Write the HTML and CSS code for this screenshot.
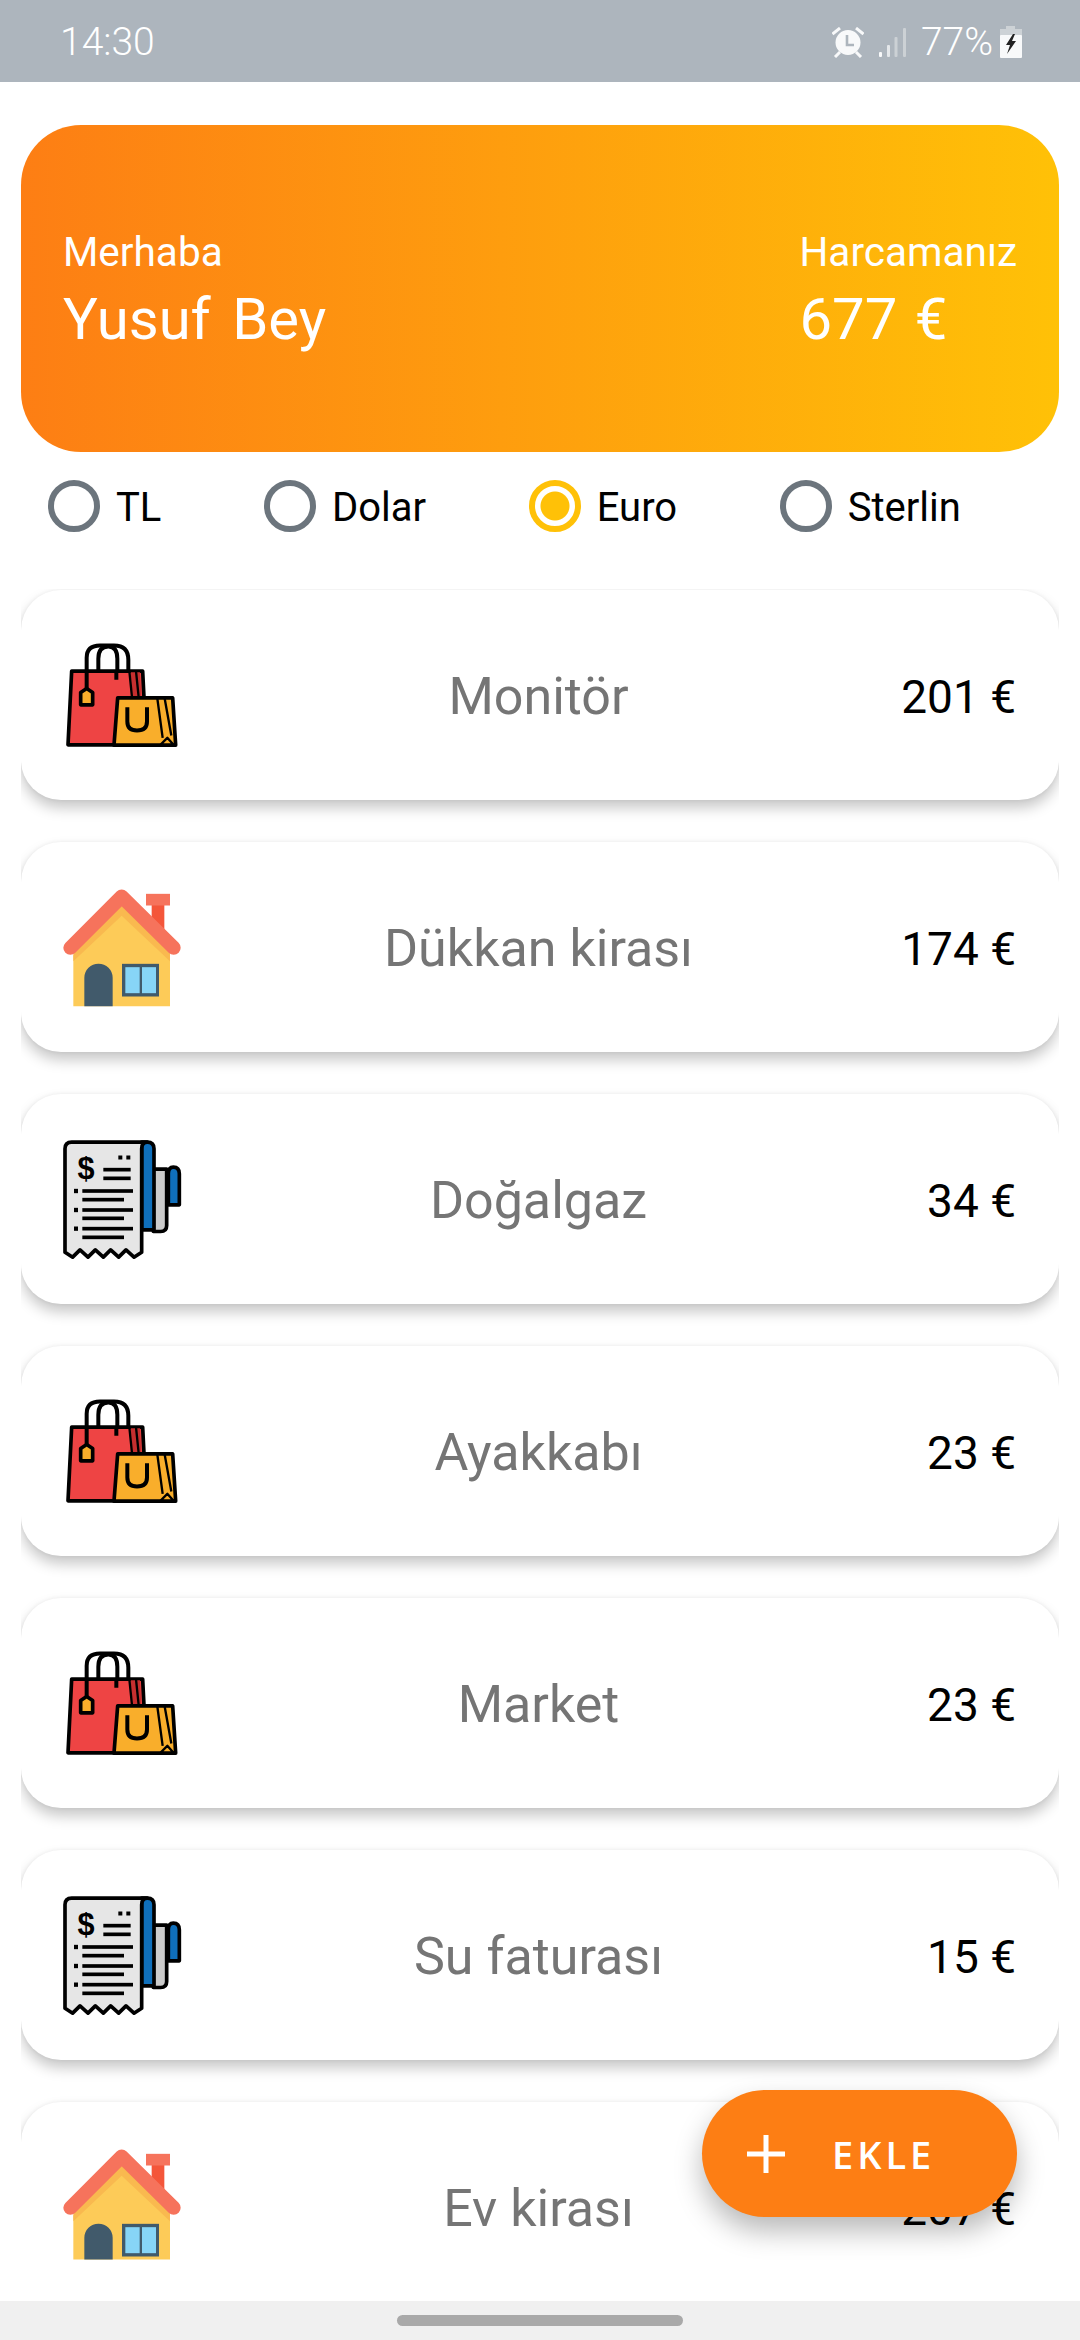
FILE: index.html
```html
<!DOCTYPE html>
<html lang="tr">
<head>
    <meta charset="UTF-8">
    <meta name="viewport" content="width=device-width, initial-scale=1.0">
    <title>Harcamalar</title>
    <link rel="stylesheet" href="styles.css">
</head>
<body>
    <svg class="icon-defs" width="0" height="0">
        <defs>
            <g id="bags">
                <path class="line" d="M140 205V112Q140 75 180 75H222Q265 75 265 118V150"/>
                <path class="line" d="M175 150V115Q175 78 205 78Q232 78 232 115V178"/>
                <path class="outline" fill="#ee4444" d="M95 152H308L312 232L222 373H84Z"/>
                <path class="line" d="M229 152V178M140 152V205"/>
                <path fill="#c62f2f" d="M272 155H300L304 230H278Z"/>
                <path class="line thin" d="M268 152L276 230M288 152L296 230"/>
                <path class="outline" fill="#f9ae2b" d="M122 253V216L140 204L158 216V253Z"/>
                <path class="outline" fill="#f9ae2b" d="M233 232H398L407 374H222Z"/>
                <path class="line" d="M262 260V303Q262 330 291 330Q321 330 321 303V260"/>
                <path class="line thin" d="M352 234L368 352M374 234L394 345"/>
                <path class="outline thin-fill" fill="#f9ae2b" d="M362 372L382 352L400 372Z"/>
            </g>
            <g id="house">
                <rect x="335" y="100" width="38" height="80" fill="#f4563a"/>
                <rect x="318" y="70" width="72" height="35" fill="#f6735c"/>
                <path fill="#fdcb58" d="M100 255L245 115L390 255V407H100Z"/>
                <path fill="#f9b94f" d="M100 235L245 105L390 235V272L245 136L100 272Z"/>
                <path fill="none" stroke="#f6735c" stroke-width="42" stroke-linecap="round" stroke-linejoin="round" d="M91 232L245 78L401 232"/>
                <path fill="#415a6b" d="M133 407V322A42 42 0 0 1 218 322V407Z"/>
                <rect x="246" y="280" width="111" height="98" fill="#415a6b"/>
                <rect x="256" y="290" width="43" height="78" fill="#87d5f7"/>
                <rect x="306" y="290" width="42" height="78" fill="#87d5f7"/>
            </g>
            <g id="receipt">
                <path class="outline" fill="#0f6fbb" d="M385 1003V910Q385 890 400 890Q418 890 418 910V1003Z"/>
                <path class="outline" fill="#cccccc" d="M340 896H380V1065Q380 1083 362 1083H340Z"/>
                <path class="outline" fill="#0f6fbb" d="M305 1078V815H322Q342 815 342 835V1078Z"/>
                <path class="outline" fill="#e6e6e6" d="M75 1145V835Q75 815 95 815H322Q305 815 305 835V1145L282 1160L258 1138L236 1160L212 1138L190 1160L166 1138L144 1160L120 1138L98 1160Z"/>
                <text class="receipt-sign" x="138" y="925">$</text>
                <rect x="235" y="855" width="12" height="12"/>
                <rect x="259" y="855" width="12" height="12"/>
                <rect x="190" y="892" width="82" height="11"/>
                <rect x="190" y="918" width="82" height="11"/>
                <rect x="102" y="955" width="12" height="13"/>
                <rect x="127" y="956" width="152" height="11"/>
                <rect x="127" y="982" width="125" height="11"/>
                <rect x="102" y="1012" width="12" height="13"/>
                <rect x="127" y="1013" width="152" height="11"/>
                <rect x="127" y="1038" width="125" height="11"/>
                <rect x="102" y="1068" width="12" height="13"/>
                <rect x="127" y="1069" width="152" height="11"/>
                <rect x="127" y="1095" width="125" height="11"/>
            </g>
        </defs>
    </svg>

    <div class="phone">
        <div class="status-bar">
            <span class="status-time">14:30</span>
            <div class="status-icons">
                <svg class="alarm" width="32" height="31" viewBox="0 0 32 31">
                    <circle cx="16" cy="15.5" r="12.5" fill="#f8f9fa"/>
                    <path d="M15 8V18H22" fill="none" stroke="#adb5bd" stroke-width="2.6"/>
                    <path d="M0.5 7L8 1M24 1L31.5 7" stroke="#f8f9fa" stroke-width="3" fill="none"/>
                    <path d="M3 30L8 25M29 30L24 25" stroke="#f8f9fa" stroke-width="3" fill="none"/>
                </svg>
                <svg class="signal" width="27" height="29" viewBox="0 0 27 29">
                    <rect x="0" y="24" width="3" height="5" rx="1" fill="#f8f9fa"/>
                    <rect x="8" y="17" width="3" height="12" rx="1" fill="#e4e7ea"/>
                    <rect x="15.5" y="9" width="3" height="20" rx="1" fill="#ccd1d5"/>
                    <rect x="24" y="0" width="3" height="29" rx="1" fill="#ccd1d5"/>
                </svg>
                <span class="status-battery">77%</span>
                <svg class="battery" width="22" height="32" viewBox="0 0 22 32">
                    <rect x="6" y="0" width="9" height="4" fill="#cdd2d6"/>
                    <rect x="0" y="3" width="22" height="7" fill="#cdd2d6"/>
                    <rect x="0" y="9" width="22" height="23" rx="1" fill="#f8f9fa"/>
                    <path d="M13 8L6 19H10L7 28L16 15H12L15 8Z" fill="#222"/>
                </svg>
            </div>
        </div>

        <header class="summary">
            <div class="summary-col">
                <span class="summary-label">Merhaba</span>
                <span class="summary-value summary-name">Yusuf Bey</span>
            </div>
            <div class="summary-col">
                <span class="summary-label">Harcamanız</span>
                <span class="summary-value">677 €</span>
            </div>
        </header>

        <div class="currency-row">
            <div class="radio"><span class="radio-mark"></span><span class="radio-label">TL</span></div>
            <div class="radio"><span class="radio-mark"></span><span class="radio-label">Dolar</span></div>
            <div class="radio"><span class="radio-mark selected"></span><span class="radio-label">Euro</span></div>
            <div class="radio"><span class="radio-mark"></span><span class="radio-label">Sterlin</span></div>
        </div>

        <main class="expense-list">
            <div class="expense-card">
                <svg class="expense-icon" viewBox="63 43.5 363 363"><use href="#bags"/></svg>
                <span class="expense-name">Monitör</span>
                <span class="expense-price">201 €</span>
            </div>
            <div class="expense-card">
                <svg class="expense-icon" viewBox="63 49.5 363 363"><use href="#house"/></svg>
                <span class="expense-name">Dükkan kirası</span>
                <span class="expense-price">174 €</span>
            </div>
            <div class="expense-card">
                <svg class="expense-icon" viewBox="63 805.5 363 363"><use href="#receipt"/></svg>
                <span class="expense-name">Doğalgaz</span>
                <span class="expense-price">34 €</span>
            </div>
            <div class="expense-card">
                <svg class="expense-icon" viewBox="63 43.5 363 363"><use href="#bags"/></svg>
                <span class="expense-name">Ayakkabı</span>
                <span class="expense-price">23 €</span>
            </div>
            <div class="expense-card">
                <svg class="expense-icon" viewBox="63 43.5 363 363"><use href="#bags"/></svg>
                <span class="expense-name">Market</span>
                <span class="expense-price">23 €</span>
            </div>
            <div class="expense-card">
                <svg class="expense-icon" viewBox="63 805.5 363 363"><use href="#receipt"/></svg>
                <span class="expense-name">Su faturası</span>
                <span class="expense-price">15 €</span>
            </div>
            <div class="expense-card">
                <svg class="expense-icon" viewBox="63 49.5 363 363"><use href="#house"/></svg>
                <span class="expense-name">Ev kirası</span>
                <span class="expense-price">207 €</span>
            </div>
        </main>

        <button class="add-btn">
            <svg width="38" height="38" viewBox="0 0 38 38"><path d="M19 0V38M0 19H38" stroke="#fff" stroke-width="5"/></svg>
            <span>EKLE</span>
        </button>

        <div class="nav-bar"><span class="nav-pill"></span></div>
    </div>
</body>
</html>
```

FILE: styles.css
```css
/* General */
body {
    margin: 0;
    background-color: #fff;
    font-family: Roboto, "Liberation Sans", sans-serif;
}

.icon-defs {
    position: absolute;
}

.phone {
    position: relative;
    width: 1080px;
    height: 2340px;
    overflow: hidden;
    display: flex;
    flex-direction: column;
}

/* Status bar */
.status-bar {
    height: 82px;
    flex: none;
    box-sizing: border-box;
    background-color: #adb5bd;
    color: #fff;
    display: flex;
    align-items: center;
    justify-content: space-between;
    padding: 2px 58px 0 60px;
    font-size: 39px;
    font-weight: 300;
}

.status-icons {
    display: flex;
    align-items: center;
}

.signal {
    margin-left: 15px;
}

.status-battery {
    margin-left: 15px;
    margin-right: 7px;
}

/* Summary card */
.summary {
    flex: none;
    height: 327px;
    margin: 43px 21px 0;
    padding: 0 42px;
    border-radius: 60px;
    background: linear-gradient(to right, #fd7e14, #ffc107);
    color: #fff;
    display: flex;
    align-items: center;
    justify-content: space-between;
}

.summary-col {
    display: flex;
    flex-direction: column;
    gap: 9px;
    padding-top: 4px;
}

.summary-label {
    font-size: 40.5px;
}

.summary-value {
    font-size: 58px;
    word-spacing: 3px;
}

.summary-name {
    word-spacing: 7px;
}

/* Currency radios */
.currency-row {
    flex: none;
    display: flex;
    gap: 102.6px;
    padding: 28px 0 0 48px;
    height: 137px;
    box-sizing: border-box;
    font-size: 40px;
    color: #000;
}

.radio {
    display: flex;
    align-items: center;
    gap: 16px;
    height: 52px;
}

.radio-label {
    padding-top: 3px;
}

.radio-mark {
    width: 52px;
    height: 52px;
    box-sizing: border-box;
    border: 6px solid #6c757d;
    border-radius: 50%;
}

.radio-mark.selected {
    border-color: #ffc107;
    background: radial-gradient(circle, #ffc107 0 14px, transparent 15px);
}

/* Expense list */
.expense-list {
    flex: 1;
    min-height: 0;
    margin: 0 21px;
    padding-top: 1px;
    overflow: hidden;
    display: flex;
    flex-direction: column;
    gap: 42px;
}

.expense-card {
    flex: none;
    height: 210px;
    padding: 0 43px 0 40px;
    background-color: #fff;
    border-radius: 40px;
    box-shadow: 0 8px 14px rgba(0, 0, 0, 0.22), 0 0 4px rgba(0, 0, 0, 0.06);
    display: grid;
    grid-template-columns: 1fr auto 1fr;
    align-items: center;
}

/* Last row runs on under the navigation bar */
.expense-card:last-child {
    padding-bottom: 60px;
}

.expense-card:last-child .expense-icon {
    clip-path: inset(0 0 8px 0);
}

.expense-icon {
    width: 121px;
    height: 121px;
}

.expense-name {
    padding-top: 2px;
    font-size: 52px;
    color: #757575;
}

.expense-price {
    justify-self: end;
    padding-top: 3px;
    font-size: 46px;
    color: #000;
}

.outline {
    stroke: #000;
    stroke-width: 11;
    stroke-linejoin: round;
}

.line {
    fill: none;
    stroke: #000;
    stroke-width: 12;
}

.line.thin {
    stroke-width: 7;
}

.thin-fill {
    stroke-width: 7;
}

.receipt-sign {
    font-family: "Liberation Sans", sans-serif;
    font-weight: 700;
    font-size: 92px;
    text-anchor: middle;
}

/* Add button */
.add-btn {
    position: absolute;
    left: 702px;
    top: 2090px;
    width: 315px;
    height: 127px;
    border: none;
    border-radius: 64px;
    background-color: #fd7e14;
    box-shadow: 0 14px 28px rgba(0, 0, 0, 0.28);
    color: #fff;
    font-family: "Open Sans", sans-serif;
    font-size: 38px;
    font-weight: 600;
    letter-spacing: 4px;
    display: flex;
    align-items: center;
    gap: 47px;
    padding: 0 0 0 45px;
}

/* Navigation bar */
.nav-bar {
    height: 39px;
    flex: none;
    background-color: #f0f0f0;
    display: flex;
    justify-content: center;
    padding-top: 14px;
    box-sizing: border-box;
    position: relative;
}

.nav-pill {
    width: 286px;
    height: 11px;
    border-radius: 6px;
    background-color: #a9a9a9;
}
```
